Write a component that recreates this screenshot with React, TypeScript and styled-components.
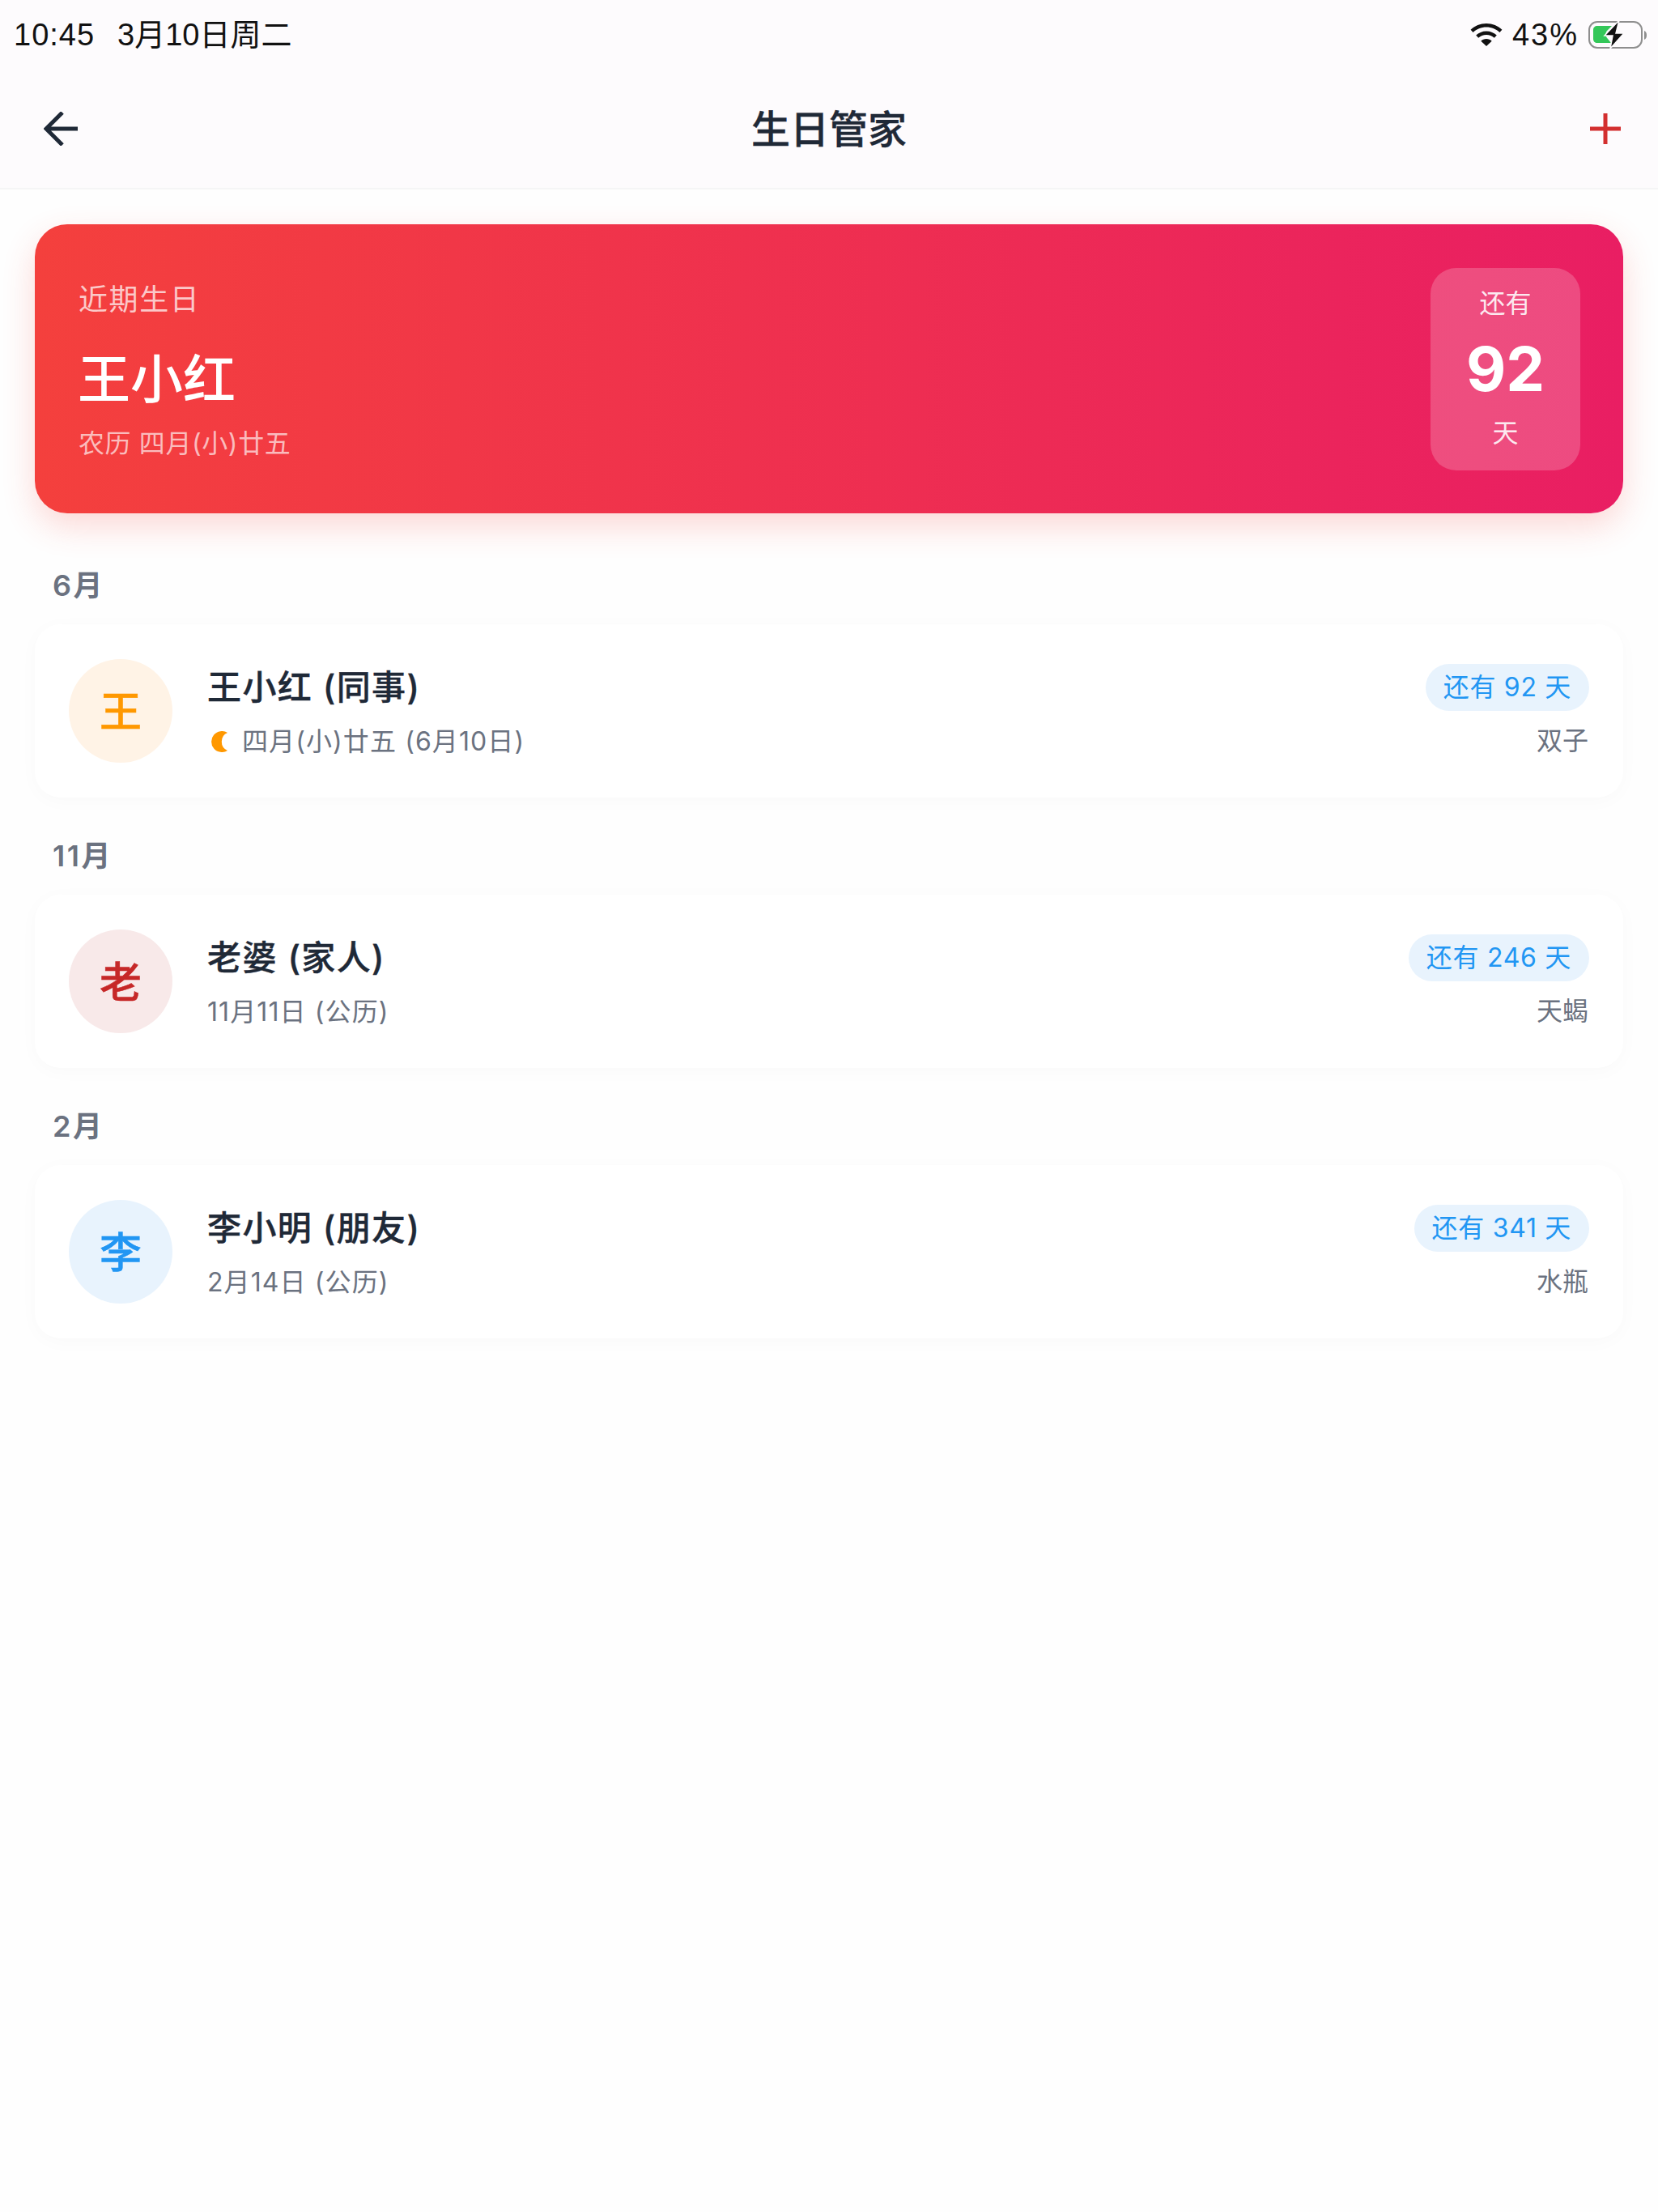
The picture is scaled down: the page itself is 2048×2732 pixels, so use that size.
import React from 'react';
import styled, { createGlobalStyle } from 'styled-components';

const GlobalStyle = createGlobalStyle`
  html, body {
    margin: 0;
    padding: 0;
    background: #fefefe;
    font-family: Inter, "Noto Sans CJK SC", sans-serif;
  }
`;

const Screen = styled.div`
  width: 2048px;
  min-height: 2732px;
  background: #fefefe;
`;

const TopArea = styled.header`
  background: #fdfbfd;
  border-bottom: 2px solid #f5f5f6;
  height: 234px;
  box-sizing: border-box;
`;

const StatusBar = styled.div`
  height: 86px;
  display: flex;
  align-items: center;
  justify-content: space-between;
  padding: 0 14px 0 17px;
  color: #111;
  font-family: "Liberation Sans", "Noto Sans CJK SC", sans-serif;
  font-size: 38px;
  line-height: 50px;
`;

const StatusGroup = styled.div<{ $gap: number }>`
  display: flex;
  align-items: center;
  gap: ${(p) => p.$gap}px;
`;

const StatusText = styled.span<{ $spacing: number }>`
  letter-spacing: ${(p) => p.$spacing}px;
`;

const NavBar = styled.div`
  height: 146px;
  display: grid;
  grid-template-columns: 1fr auto 1fr;
  align-items: center;
  padding: 0 46px;
`;

const NavStart = styled.div`
  display: flex;
  padding-left: 8px;
`;

const NavTitle = styled.h1`
  margin: 0 0 6px;
  font-size: 48px;
  font-weight: 500;
  -webkit-text-stroke: 0.4px #1f2937;
  color: #1f2937;
`;

const NavEnd = styled.div`
  display: flex;
  justify-content: flex-end;
`;

const Content = styled.main`
  padding: 43px 43px;
`;

const Hero = styled.section`
  height: 357px;
  box-sizing: border-box;
  padding: 0 53px 0 55px;
  border-radius: 40px;
  background: linear-gradient(90deg, #f4403d, #e91e63);
  box-shadow: 0 16px 40px rgba(244, 67, 54, 0.2);
  display: flex;
  align-items: center;
  justify-content: space-between;
  margin-bottom: 65px;
`;

const HeroLeft = styled.div`
  display: flex;
  flex-direction: column;
  padding-top: 3px;
  margin-left: -1px;
`;

const HeroLabel = styled.div`
  font-size: 36px;
  line-height: 50px;
  letter-spacing: 1.6px;
  color: rgba(255, 255, 255, 0.72);
`;

const HeroName = styled.div`
  font-size: 65px;
  line-height: 90px;
  font-weight: 500;
  color: #fff;
  margin: 29px 0 0 -1px;
`;

const HeroDate = styled.div`
  font-size: 32px;
  line-height: 44px;
  letter-spacing: 0.6px;
  color: rgba(255, 255, 255, 0.66);
  margin-top: 12px;
`;

const CountBox = styled.div`
  width: 185px;
  height: 250px;
  border-radius: 32px;
  background: rgba(255, 255, 255, 0.2);
  display: flex;
  flex-direction: column;
  align-items: center;
  color: #fff;
`;

const CountSmall = styled.div<{ $top: number }>`
  font-size: 32px;
  line-height: 44px;
  margin-top: ${(p) => p.$top}px;
  color: rgba(255, 255, 255, 0.9);
`;

const CountNumber = styled.div`
  font-size: 76px;
  line-height: 90px;
  font-weight: 700;
  margin-top: 13px;
`;

const Group = styled.section`
  margin-top: 48px;
`;

const Month = styled.h2`
  margin: 0 0 24px 22px;
  font-size: 36px;
  line-height: 48px;
  font-weight: 600;
  letter-spacing: 2.5px;
  color: #6b7280;
`;

const Card = styled.article`
  height: 214px;
  box-sizing: border-box;
  padding: 0 42px;
  border-radius: 32px;
  background: #fff;
  box-shadow: 0 4px 24px rgba(0, 0, 0, 0.025);
  display: flex;
  align-items: center;
`;

const Avatar = styled.div<{ $bg: string; $fg: string }>`
  width: 128px;
  height: 128px;
  box-sizing: border-box;
  padding-bottom: 6px;
  border-radius: 50%;
  flex: none;
  display: flex;
  align-items: center;
  justify-content: center;
  background: ${(p) => p.$bg};
  color: ${(p) => p.$fg};
  -webkit-text-stroke: 0.5px ${(p) => p.$fg};
  font-size: 52px;
  font-weight: 500;
`;

const Info = styled.div`
  margin-left: 43px;
  padding-top: 2px;
  flex: 1;
  display: flex;
  flex-direction: column;
  gap: 16px;
`;

const Name = styled.div`
  font-size: 42px;
  line-height: 58px;
  font-weight: 500;
  letter-spacing: 1.4px;
  -webkit-text-stroke: 0.4px #1f2937;
  color: #1f2937;
`;

const Sub = styled.div`
  font-size: 32px;
  line-height: 44px;
  letter-spacing: 1.1px;
  color: #6b7280;
  display: flex;
  align-items: center;
  gap: 18px;
`;

const MoonWrap = styled.span`
  display: flex;
  margin-left: 5px;
`;

const Side = styled.div`
  display: flex;
  flex-direction: column;
  align-items: flex-end;
  gap: 15px;
`;

const Pill = styled.div`
  height: 58px;
  box-sizing: border-box;
  padding: 0 22px;
  border-radius: 29px;
  background: #e8f3fd;
  color: #2196f3;
  font-size: 32px;
  line-height: 58px;
  letter-spacing: 0.7px;
`;

const Zodiac = styled.div`
  font-size: 32px;
  line-height: 44px;
  color: #6b7280;
  margin-right: 1px;
`;

const BackIcon = () => (
  <svg width="42" height="42" viewBox="0 0 42 42" fill="none" stroke="#1f2937" strokeWidth="5">
    <path d="M42 21H3M23 1 3 21l20 20" />
  </svg>
);

const PlusIcon = () => (
  <svg width="38" height="38" viewBox="0 0 38 38" fill="none" stroke="#d32f2f" strokeWidth="5">
    <path d="M19 0v38M0 19h38" />
  </svg>
);

const WifiIcon = () => (
  <svg width="40" height="28" viewBox="0 0 40 28" fill="#111">
    <path d="M20 0C12.4 0 5.6 3 .6 7.8l3 3.2C7.800 7 13.600 4.500 20 4.500S32.200 7 36.400 11l3-3.200C34.400 3 27.600 0 20 0Z" />
    <path d="M20 9.500c-5 0-9.500 2-12.800 5.100l3 3.200c2.500-2.400 6-3.900 9.800-3.900s7.300 1.500 9.800 3.900l3-3.200C29.500 11.500 25 9.500 20 9.500Z" />
    <path d="M20 19c-2.600 0-5 1-6.700 2.700L20 28l6.700-6.300C25 20 22.600 19 20 19Z" />
  </svg>
);

const BatteryIcon = () => (
  <svg width="72" height="36" viewBox="0 0 72 36">
    <rect x="1" y="2" width="65" height="32" rx="10" fill="none" stroke="#8e8e8e" strokeWidth="2" />
    <path d="M69 13c1.800.6 3 2.500 3 5.500s-1.200 4.900-3 5.500Z" fill="#8e8e8e" />
    <path d="M11 7h18l-6 6c-2.500 3-2 7 1 10l4 5H11c-3 0-5-2-5-5V12c0-3 2-5 5-5Z" fill="#34c759" />
    <path d="M38 0 20 19h10l-3 16 17-19H34Z" fill="#111" stroke="#fdfbfd" strokeWidth="1.500" />
  </svg>
);

const MoonIcon = () => (
  <svg width="20" height="26" viewBox="0 0 20 26" fill="#ff9800">
    <path d="M20 2A13 13 0 1 0 20 24A12 12 0 0 1 20 2Z" />
  </svg>
);

type Person = {
  month: string;
  avatar: string;
  bg: string;
  fg: string;
  name: string;
  date: string;
  lunar?: boolean;
  days: string;
  zodiac: string;
};

const people: Person[] = [
  { month: '6月', avatar: '王', bg: '#fff3e6', fg: '#ff9800', name: '王小红 (同事)', date: '四月(小)廿五 (6月10日)', lunar: true, days: '还有 92 天', zodiac: '双子' },
  { month: '11月', avatar: '老', bg: '#f8e9e9', fg: '#c62828', name: '老婆 (家人)', date: '11月11日 (公历)', days: '还有 246 天', zodiac: '天蝎' },
  { month: '2月', avatar: '李', bg: '#e8f3fd', fg: '#2196f3', name: '李小明 (朋友)', date: '2月14日 (公历)', days: '还有 341 天', zodiac: '水瓶' },
];

export default function App() {
  return (
    <Screen>
      <GlobalStyle />
      <TopArea>
        <StatusBar>
          <StatusGroup $gap={28}>
            <StatusText $spacing={1}>10:45</StatusText>
            <StatusText $spacing={0}>3月10日周二</StatusText>
          </StatusGroup>
          <StatusGroup $gap={12}>
            <WifiIcon />
            <StatusText $spacing={2}>43%</StatusText>
            <BatteryIcon />
          </StatusGroup>
        </StatusBar>
        <NavBar>
          <NavStart>
            <BackIcon />
          </NavStart>
          <NavTitle>生日管家</NavTitle>
          <NavEnd>
            <PlusIcon />
          </NavEnd>
        </NavBar>
      </TopArea>
      <Content>
        <Hero>
          <HeroLeft>
            <HeroLabel>近期生日</HeroLabel>
            <HeroName>王小红</HeroName>
            <HeroDate>农历 四月(小)廿五</HeroDate>
          </HeroLeft>
          <CountBox>
            <CountSmall $top={22}>还有</CountSmall>
            <CountNumber>92</CountNumber>
            <CountSmall $top={13}>天</CountSmall>
          </CountBox>
        </Hero>
        {people.map((p) => (
          <Group key={p.month}>
            <Month>{p.month}</Month>
            <Card>
              <Avatar $bg={p.bg} $fg={p.fg}>{p.avatar}</Avatar>
              <Info>
                <Name>{p.name}</Name>
                <Sub>
                  {p.lunar && (
                    <MoonWrap>
                      <MoonIcon />
                    </MoonWrap>
                  )}
                  {p.date}
                </Sub>
              </Info>
              <Side>
                <Pill>{p.days}</Pill>
                <Zodiac>{p.zodiac}</Zodiac>
              </Side>
            </Card>
          </Group>
        ))}
      </Content>
    </Screen>
  );
}
